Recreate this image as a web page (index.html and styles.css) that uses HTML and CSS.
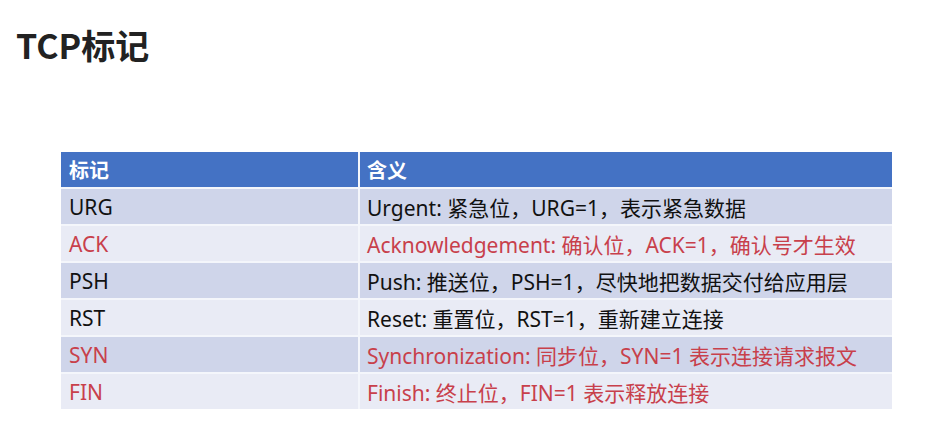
FILE: index.html
```html
<!DOCTYPE html>
<html lang="zh-CN">
<head>
<meta charset="utf-8">
<title>TCP标记</title>
<link rel="stylesheet" href="styles.css">
</head>
<body>
<div class="slide">
  <h1 class="title">TCP标记</h1>
  <div class="table">
    <div class="cell head">标记</div>
    <div class="cell head">含义</div>

    <div class="cell odd">URG</div>
    <div class="cell odd">Urgent: 紧急位，URG=1，表示紧急数据</div>

    <div class="cell even red">ACK</div>
    <div class="cell even red">Acknowledgement: 确认位，ACK=1，确认号才生效</div>

    <div class="cell odd">PSH</div>
    <div class="cell odd">Push: 推送位，PSH=1，尽快地把数据交付给应用层</div>

    <div class="cell even">RST</div>
    <div class="cell even">Reset: 重置位，RST=1，重新建立连接</div>

    <div class="cell odd red">SYN</div>
    <div class="cell odd red">Synchronization: 同步位，SYN=1 表示连接请求报文</div>

    <div class="cell even red">FIN</div>
    <div class="cell even red">Finish: 终止位，FIN=1 表示释放连接</div>
  </div>
</div>
</body>
</html>
```

FILE: styles.css
```css
html, body {
  margin: 0;
  padding: 0;
  background: #ffffff;
}

.slide {
  width: 931px;
  height: 443px;
  font-family: "Noto Sans", "Noto Sans CJK SC", sans-serif;
  color: #111111;
}

.title {
  margin: 0;
  padding: 23px 0 0 16px;
  height: 44px;
  font-family: "Noto Sans CJK SC", sans-serif;
  font-weight: 700;
  font-size: 34px;
  line-height: 44px;
  color: #222222;
}

.table {
  margin: 85px 0 0 61px;
  width: 831px;
  display: grid;
  grid-template-columns: 297px 1fr;
  grid-auto-rows: 35px;
  gap: 2px 2px;
  background: #f4f6fb;
}

.cell {
  display: flex;
  align-items: center;
  font-size: 21px;
  white-space: nowrap;
}

.cell:nth-child(odd) {
  padding-left: 8px;
}

.cell:nth-child(even) {
  padding-left: 7px;
}

.head {
  background: #4472c4;
  color: #ffffff;
  font-family: "Noto Sans CJK SC", sans-serif;
  font-weight: 700;
  font-size: 20px;
}

.odd {
  background: #cfd5ea;
}

.even {
  background: #e9ebf5;
}

.red {
  color: #c8404b;
}
```
